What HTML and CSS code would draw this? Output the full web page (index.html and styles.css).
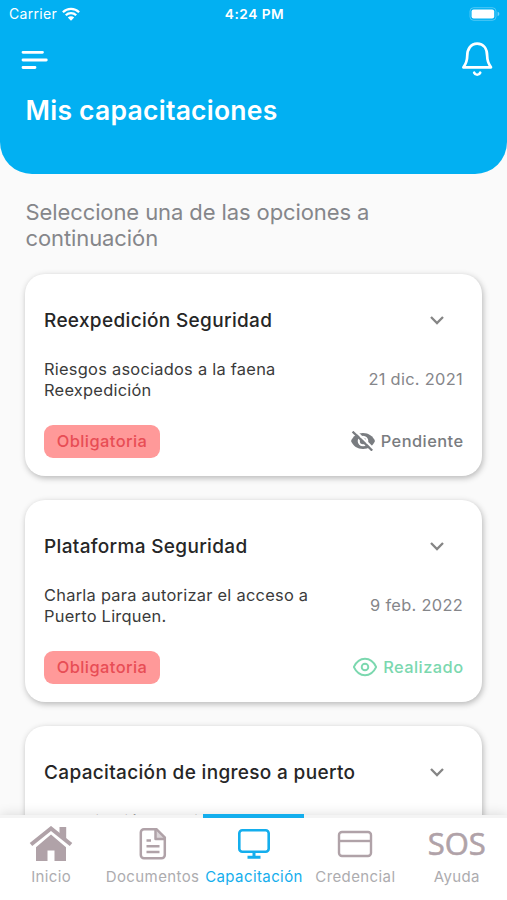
FILE: index.html
```html
<!DOCTYPE html>
<html lang="es">
<head>
<meta charset="utf-8">
<title>Mis capacitaciones</title>
<link rel="stylesheet" href="styles.css">
</head>
<body>
<div class="app">
  <header class="header">
    <div class="status">
      <div class="carrier"><span class="carrier-name">Carrier</span>
        <svg class="wifi" viewBox="0 0 18 14" width="18" height="14"><g fill="none" stroke="#fff" stroke-width="2.3"><path d="M.9 5.2a11.6 11.6 0 0 1 16.2 0"/><path d="M3.8 8.3a7.4 7.4 0 0 1 10.4 0"/></g><path d="M9 13.8 5.8 10.500a4.600 4.600 0 0 1 6.400 0z" fill="#fff"/></svg>
      </div>
      <span class="clock">4:24 PM</span>
      <svg class="battery" viewBox="0 0 31 14" width="31" height="14"><rect x="1" y=".7" width="26" height="12.6" rx="3.6" fill="none" stroke="#fff" stroke-opacity=".3" stroke-width="1"/><rect x="2.6" y="2.500" width="22.600" height="9" rx="2" fill="#fff"/><path d="M28.6 4.8q1.8.6 1.8 2.2t-1.8 2.2z" fill="#fff" fill-opacity=".45"/></svg>
    </div>
    <div class="toolbar">
      <svg class="menu" viewBox="0 0 28 22" width="28" height="22"><path d="M2 3.300h19.500M2 11h23.300M2 18.500h12" fill="none" stroke="#fff" stroke-width="2.800" stroke-linecap="round"/></svg>
      <svg class="bell" viewBox="0 0 32 36" width="32" height="36"><g fill="none" stroke="#fff" stroke-width="2.700" stroke-linecap="round" stroke-linejoin="round"><path d="M2.400 26.300h27.600c-2.700-3.600-3.800-6.200-3.800-11C26.200 7.600 22.400 2.700 16.200 2.700S6.200 7.600 6.200 15.300c0 4.800-1.100 7.400-3.800 11z"/><path d="M13.200 31.700c1.200 2.700 4.800 2.700 6 0"/></g></svg>
    </div>
    <h1 class="title">Mis capacitaciones</h1>
  </header>
  <main class="content">
    <p class="intro">Seleccione una de las opciones a<br>continuación</p>
    <article class="card">
      <div class="card-head"><h2 class="name">Reexpedición Seguridad</h2><svg class="chevron" viewBox="0 0 16 10" width="16" height="10"><path d="m2 2 6 6 6-6"/></svg></div>
      <div class="card-body"><p class="desc">Riesgos asociados a la faena<br>Reexpedición</p><span class="date">21 dic. 2021</span></div>
      <div class="card-foot"><span class="badge">Obligatoria</span>
        <span class="state pending"><svg viewBox="0 0 24 20" width="24" height="20"><path d="M0 10C2 5 6.500 2 12 2s10 3 12 8c-2 5-6.500 8-12 8S2 15 0 10z" fill="currentColor"/><circle cx="12" cy="10" r="5.300" fill="#fff"/><circle cx="12" cy="10" r="3.200" fill="currentColor"/><path d="M3.500-1 23.500 19" stroke="#fff" stroke-width="2.400"/><path d="m1.600.6 19.600 19" stroke="currentColor" stroke-width="2.200"/></svg><span>Pendiente</span></span></div>
    </article>
    <article class="card">
      <div class="card-head"><h2 class="name">Plataforma Seguridad</h2><svg class="chevron" viewBox="0 0 16 10" width="16" height="10"><path d="m2 2 6 6 6-6"/></svg></div>
      <div class="card-body"><p class="desc">Charla para autorizar el acceso a<br>Puerto Lirquen.</p><span class="date">9 feb. 2022</span></div>
      <div class="card-foot"><span class="badge">Obligatoria</span>
        <span class="state done"><svg viewBox="0 0 24 20" width="24" height="20"><g fill="none" stroke="currentColor" stroke-width="1.900"><path d="M.8 10C3.200 5 7 1.700 12 1.700S20.800 5 23.200 10c-2.400 5-6.200 8.300-11.200 8.300S3.200 15 .8 10z" stroke-linejoin="round"/><circle cx="12" cy="10" r="3.300"/></g></svg><span>Realizado</span></span></div>
    </article>
    <article class="card">
      <div class="card-head"><h2 class="name">Capacitación de ingreso a puerto</h2><svg class="chevron" viewBox="0 0 16 10" width="16" height="10"><path d="m2 2 6 6 6-6"/></svg></div>
      <div class="card-body"><p class="desc">Capacitación para ingreso a<br>puerto</p></div>
    </article>
  </main>
  <nav class="tabs">
    <a class="tab"><svg viewBox="0 0 44 36" width="44" height="36"><path d="M22 8.500 37 21.300V35H25.500V24.500h-7V35H7V21.300z" fill="currentColor"/><path d="m1.500 19.500 20.500-17 20.500 17" fill="none" stroke="#fff" stroke-width="7"/><path d="m2 18.500 20-16 20 16" fill="none" stroke="currentColor" stroke-width="4"/><path d="M30.500 1h6.700v12.500l-6.700-5.400z" fill="currentColor"/></svg><span>Inicio</span></a>
    <a class="tab"><svg viewBox="0 0 44 36" width="44" height="36"><path d="M13 3.200h12.500l8.300 8.300V29a3.200 3.200 0 0 1-3.200 3.200H13A3.200 3.200 0 0 1 9.800 29V6.400A3.200 3.200 0 0 1 13 3.200z" fill="none" stroke="currentColor" stroke-width="2.500"/><path d="M24.500 3v10H34z" fill="currentColor" fill-opacity=".45"/><path d="M24.500 3v10H34M15.500 14.500H20M15.500 20.200h13M15.500 25.900h13" fill="none" stroke="currentColor" stroke-width="2.500" stroke-linejoin="round"/></svg><span>Documentos</span></a>
    <a class="tab active"><svg viewBox="0 0 44 36" width="44" height="36"><rect x="7.300" y="4.200" width="29.400" height="21.600" rx="3" fill="none" stroke="currentColor" stroke-width="2.600"/><path d="M22 26v5M15.500 31.200h13" stroke="currentColor" stroke-width="3"/></svg><span>Capacitación</span></a>
    <a class="tab"><svg viewBox="0 0 44 36" width="44" height="36"><rect x="6" y="6" width="32" height="24" rx="3" fill="none" stroke="currentColor" stroke-width="2.400"/><path d="M6 15h32" stroke="currentColor" stroke-width="2.400"/></svg><span>Credencial</span></a>
    <a class="tab"><b class="sos">SOS</b><span>Ayuda</span></a>
  </nav>
</div>
</body>
</html>
```
FILE: styles.css
```css
* { box-sizing: border-box; }
body { margin: 0; background: #fafafa; font-family: Inter, "Liberation Sans", sans-serif; }
h1, h2, p { margin: 0; }
svg { display: block; flex: none; }
.app { height: 900px; display: flex; flex-direction: column; overflow: hidden; }
.header { height: 174px; flex: none; background: #02b0f2; color: #fff; border-radius: 0 0 32px 32px; }
.status { height: 28px; padding: 0 7px 0 9px; display: grid; grid-template-columns: 1fr auto 1fr; align-items: center; font-size: 14px; line-height: 28px; }
.carrier { display: flex; align-items: center; gap: 5px; }
.carrier-name { letter-spacing: .3px; }
.clock { font-weight: 600; letter-spacing: .5px; font-size: 13.700px; }
.battery { justify-self: end; }
.toolbar { height: 62px; display: flex; justify-content: space-between; padding: 13px 14px 0 21px; }
.menu { margin-top: 8px; }
.title { padding: 4px 0 0 25.500px; font-size: 26.500px; line-height: 32px; font-weight: 600; letter-spacing: .25px; }
.content { flex: 1; min-height: 0; padding: 25px 25px 0; overflow: hidden; }
.intro { font-size: 22px; line-height: 26px; letter-spacing: -.1px; color: #85868a; margin: 0 0 23px .5px; }
.card { height: 202px; margin-bottom: 24px; padding: 27px 19px 0; background: #fff; border-radius: 20px; box-shadow: 1px 2px 6px rgba(0,0,0,.28); }
.card-head { height: 38px; padding-top: 1px; display: flex; justify-content: space-between; padding-right: 18.500px; }
.name { font-size: 19px; line-height: 38px; font-weight: 500; letter-spacing: .33px; color: #262626; white-space: nowrap; }
.chevron { margin-top: 12.500px; fill: none; stroke: #858585; stroke-width: 2.300; }
.card-body { height: 60px; padding-top: 22px; display: flex; justify-content: space-between; align-items: center; }
.desc { font-size: 16.400px; line-height: 21px; letter-spacing: .26px; color: #3a3a3a; white-space: nowrap; }
.date { margin-top: -2px; font-size: 16.400px; letter-spacing: .3px; color: #85868a; }
.card-foot { margin-top: 26px; height: 33px; display: flex; justify-content: space-between; align-items: center; }
.badge { width: 116px; height: 33px; border-radius: 9px; background: #ff9999; color: #e84d55; font-size: 16.400px; font-weight: 500; letter-spacing: .45px; line-height: 32px; text-align: center; }
.state { display: flex; align-items: center; gap: 6px; font-size: 16.400px; font-weight: 500; letter-spacing: .45px; margin: -1px -.5px 0 0; }
.pending { color: #797c80; }
.done { color: #7bd8af; }
.tabs { position: relative; height: 85px; flex: none; display: grid; grid-template-columns: repeat(5, 1fr); background: #fff; border-top: 3px solid #f4f4f4; box-shadow: 0 0 12px rgba(0,0,0,.14); }
.tab { color: #b0a2a8; display: flex; flex-direction: column; align-items: center; padding: 8px 0 0 1px; white-space: nowrap; }
.tab span { font-size: 15px; line-height: 29px; letter-spacing: .4px; color: #adacaf; }
.tab.active, .tab.active span { color: #14aeed; }
.tab.active { margin-top: -4px; border-top: 4px solid #14aeed; }
.sos { height: 36px; font: 500 31px/35px "Open Sans", sans-serif; -webkit-text-stroke: .6px currentColor; }
```
